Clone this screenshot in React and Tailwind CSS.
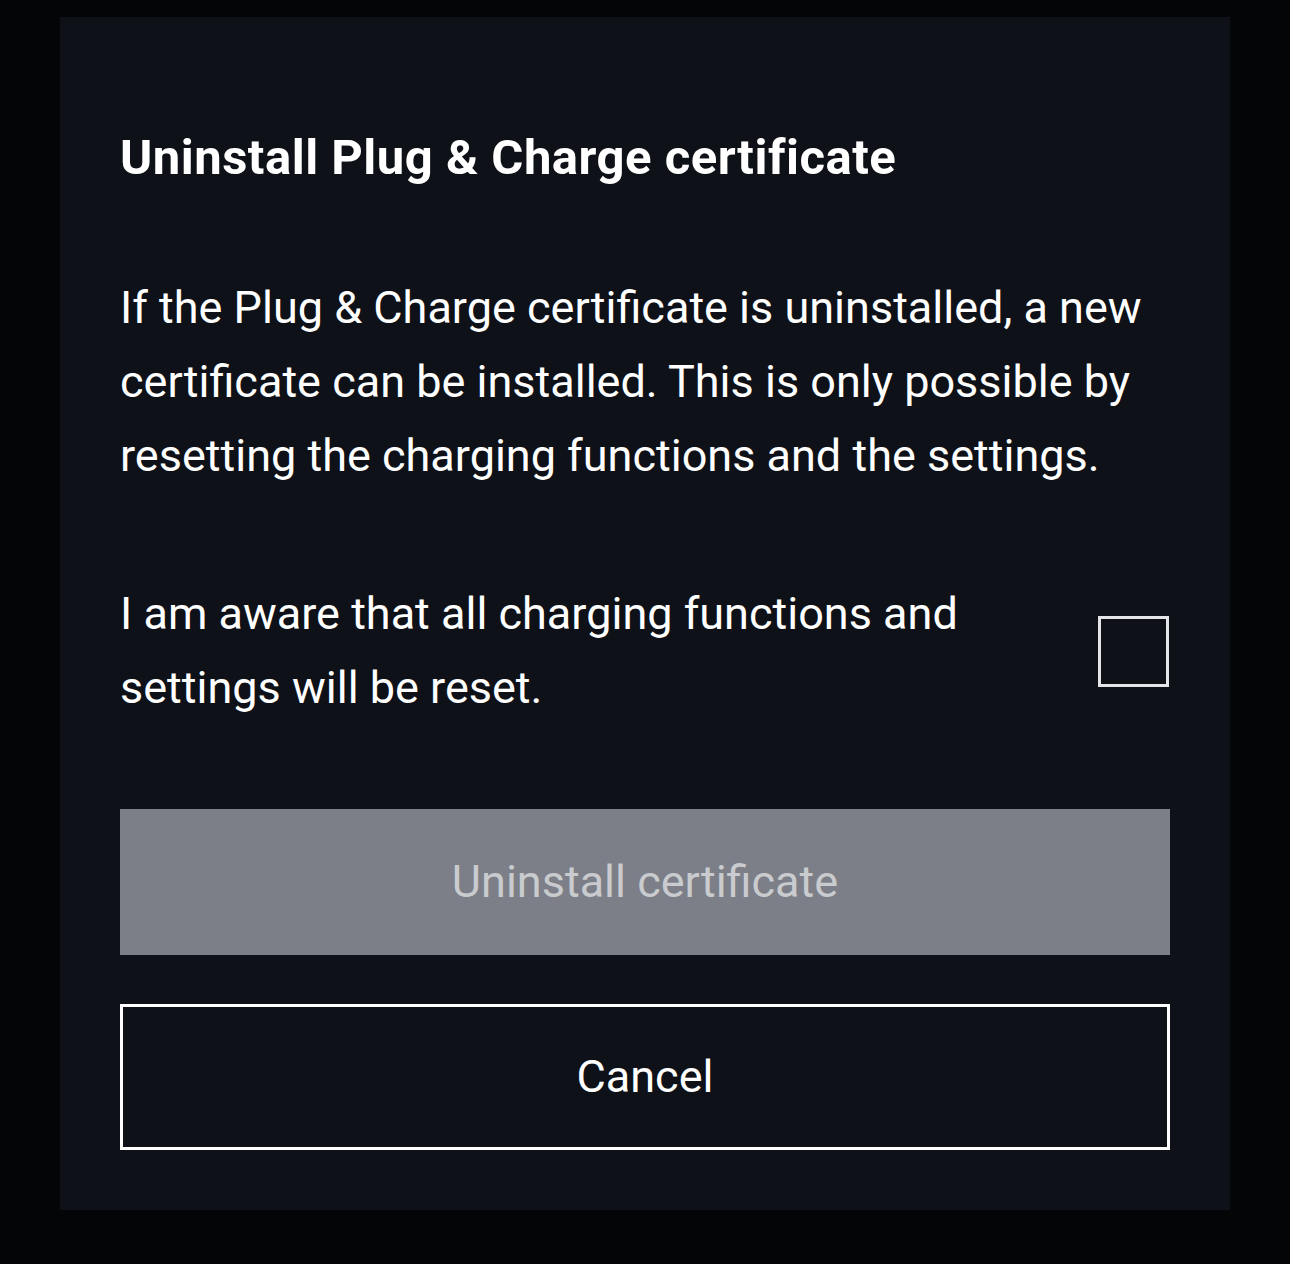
export default function App() {
  return (
    <div className="min-h-[1264px] bg-[#030507] px-[60px] pt-[17px] pb-[54px] font-['Roboto',sans-serif] text-white">
      <div className="bg-[#0e1117] px-[60px] pt-[104px] pb-[60px]">
        <h1 className="text-[49px] leading-[74px] font-bold tracking-[0.5px]">Uninstall Plug &amp; Charge certificate</h1>

        <p className="mt-[76px] text-[45px] leading-[74px]">
          If the Plug &amp; Charge certificate is uninstalled, a new
          <br />
          certificate can be installed. This is only possible by
          <br />
          resetting the charging functions and the settings.
        </p>

        <label className="mt-[84px] flex items-center justify-between">
          <span className="text-[45px] leading-[74px]">
            I am aware that all charging functions and
            <br />
            settings will be reset.
          </span>
          <span className="mr-px h-[71px] w-[71px] shrink-0 border-[3px] border-[#e3e5e8]" />
        </label>

        <div className="mt-[84px] flex flex-col gap-[49px]">
          <button className="flex h-[146px] w-full items-center justify-center bg-[#7c7f87] text-[45px] text-[#c9cbce]">
            Uninstall certificate
          </button>
          <button className="flex h-[146px] w-full items-center justify-center border-[3px] border-white text-[45px] text-white">
            Cancel
          </button>
        </div>
      </div>
    </div>
  );
}
